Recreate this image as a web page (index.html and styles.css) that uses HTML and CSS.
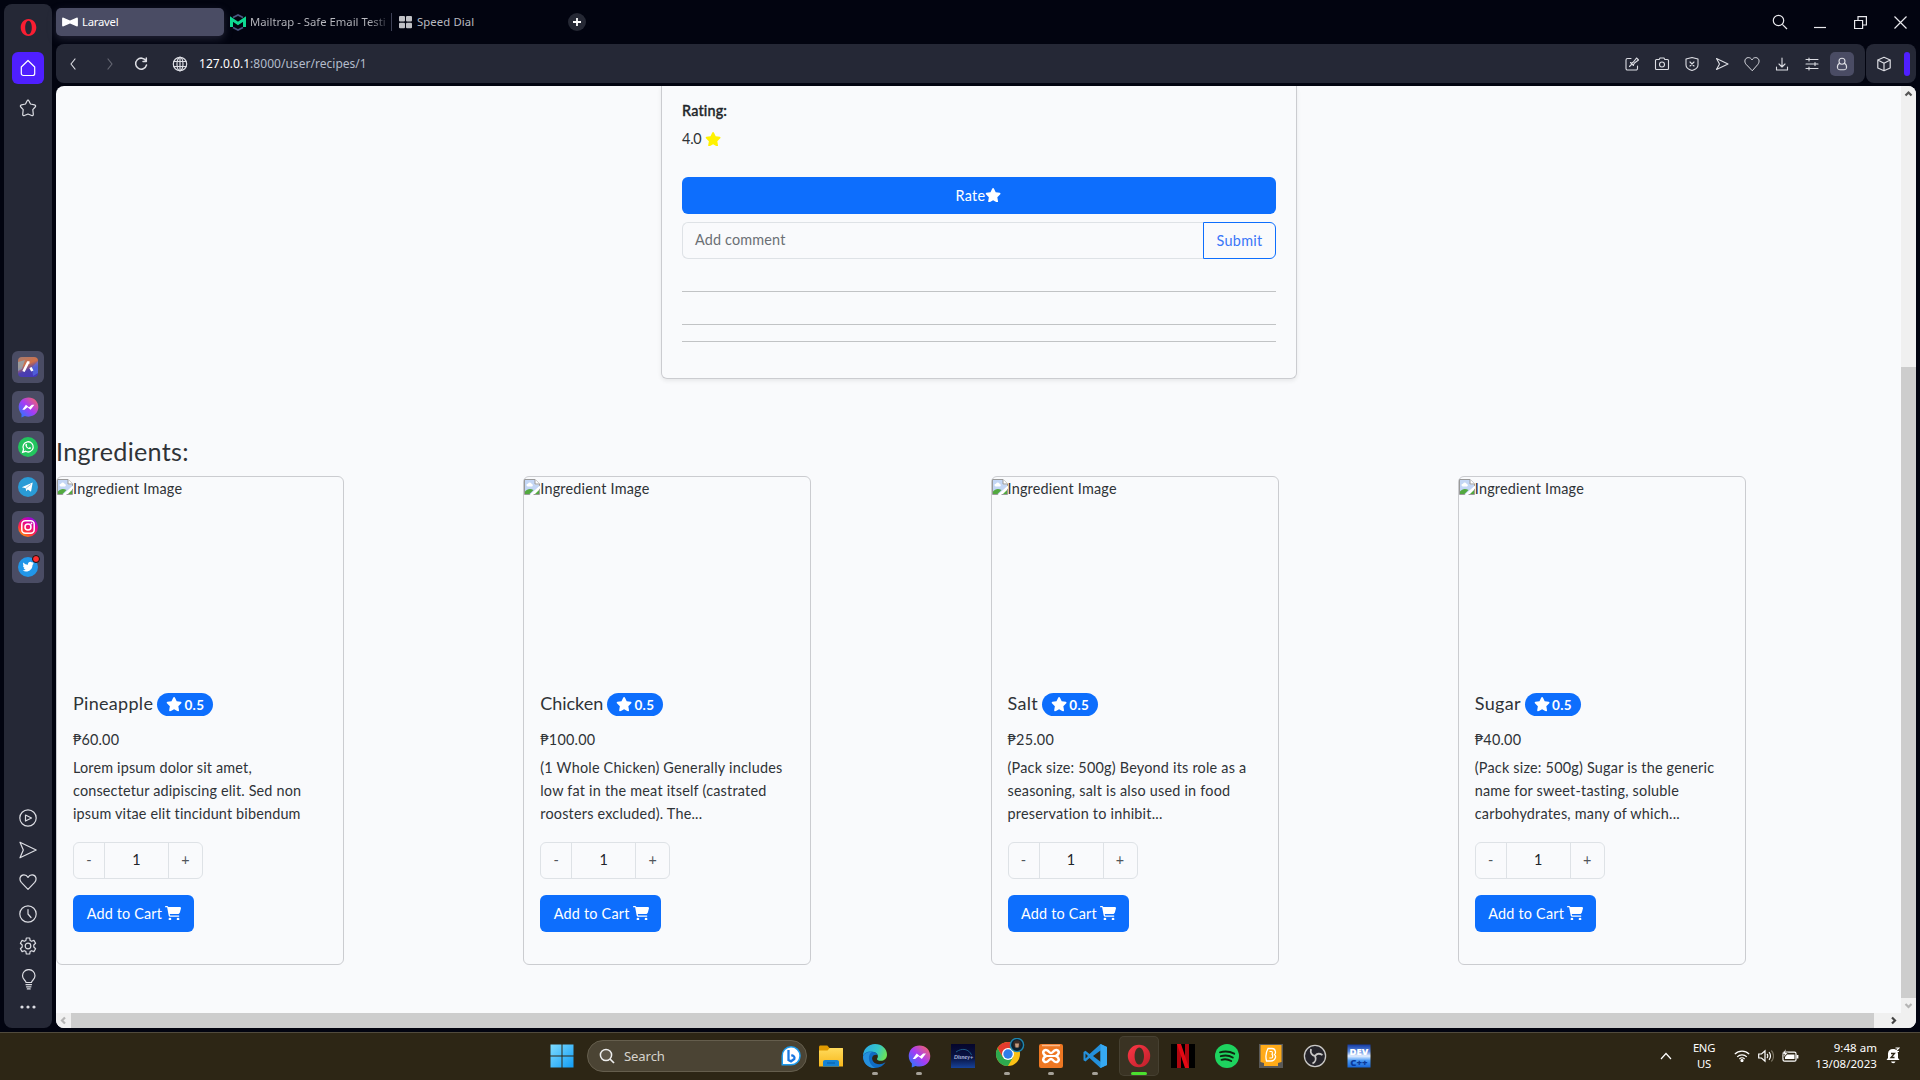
FILE: index.html
```html
<!DOCTYPE html>
<html lang="en">
<head>
<meta charset="utf-8">
<title>Laravel</title>
<link rel="stylesheet" href="styles.css">
</head>
<body>
<svg class="defs" aria-hidden="true">
  <defs>
    <symbol id="star" viewBox="0 0 576 512"><path d="M316.9 18C311.6 7 300.4 0 288.1 0s-23.4 7-28.8 18L195 150.3 51.4 171.5c-12 1.8-22 10.2-25.7 21.7s-.7 24.2 7.9 32.7L137.8 329 113.2 474.7c-2 12 3 24.2 12.9 31.3s23 8 33.8 2.3l128.3-68.5 128.3 68.5c10.8 5.7 23.9 4.9 33.8-2.3s14.9-19.3 12.9-31.3L438.5 329 542.7 225.9c8.6-8.5 11.7-21.2 7.9-32.7s-13.7-19.9-25.7-21.7L381.2 150.3 316.9 18z"/></symbol>
    <symbol id="cart" viewBox="0 0 576 512"><path d="M0 24C0 10.7 10.7 0 24 0H69.5c22 0 41.5 12.8 50.6 32h411c26.3 0 45.5 25 38.6 50.4l-41 152.3c-8.5 31.4-37 53.3-69.5 53.3H170.7l5.4 28.5c2.2 11.3 12.1 19.5 23.6 19.5H488c13.3 0 24 10.7 24 24s-10.7 24-24 24H199.7c-34.6 0-64.3-24.6-70.7-58.5L77.4 54.5c-.7-3.8-4-6.5-7.9-6.5H24C10.7 48 0 37.3 0 24zM128 464a48 48 0 1 1 96 0 48 48 0 1 1-96 0zm336-48a48 48 0 1 1 0 96 48 48 0 1 1 0-96z"/></symbol>
    <symbol id="broken" viewBox="0 0 16 16"><path d="M.5.5h10.5l4.500 4.500v10.500H.5z" fill="#fff" stroke="#9a9a9a"/><path d="M1 1h10v4.500h4V8L7 15H1z" fill="#c3d6f5"/><path d="M2.500 6.500a1.500 1.500 0 0 1 1.500-1.800 2 2 0 0 1 3.700.3 1.300 1.300 0 0 1 .3 2.500H3.500z" fill="#fff"/><path d="M1 15v-2.500c2-2.500 5-3.500 8.500-1.500L5.500 15z" fill="#53a93f"/><path d="M11 14.900 15 11v4z" fill="#53a93f"/><path d="M5.500 16 16 6.500v3L9 16z" fill="#fff"/><path d="M11 .5V5h4.500" fill="#fff" stroke="#9a9a9a"/></symbol>
    <symbol id="heart" viewBox="0 0 18 18"><path d="M9 16.300 2.300 9.300C-.2 6.300 1 2 4.700 1.800 6.700 1.700 8.200 2.800 9 4.400 9.800 2.800 11.300 1.700 13.300 1.800 17 2 18.200 6.300 15.700 9.300z"/></symbol>
    <symbol id="send" viewBox="0 0 18 18"><path d="M1 1.200 17.200 9 1 16.800 4.300 9z"/></symbol>
    <symbol id="ogo" viewBox="0 0 24 24"><path fill-rule="evenodd" d="M12 .8a11.200 11.200 0 1 0 0 22.400A11.200 11.200 0 0 0 12 .8zM12.300 3.400c2.700 0 4.700 3.800 4.700 8.600s-2 8.600-4.700 8.600S7.600 16.800 7.600 12s2-8.600 4.700-8.600z"/></symbol>
    <symbol id="mess" viewBox="0 0 22 22"><path d="M11 .5C5 .5.7 4.900.7 10.600c0 2.900 1.200 5.300 3 7.100l-.1 3.800 3.600-1.500c1.200.4 2.500.6 3.800.6 6 0 10.300-4.300 10.300-10S17 .5 11 .5z" fill="url(#gm)"/><path d="M4.500 13.300 8.300 8.200l3.200 2.500 3-2.500h2.700l-4 5.100-3.200-2.500-3.200 2.500z" fill="#fff"/></symbol>
    <linearGradient id="gm" x1="0" y1="1" x2="1" y2="0"><stop offset="0" stop-color="#1482ff"/><stop offset=".5" stop-color="#a63bf5"/><stop offset="1" stop-color="#ff6a55"/></linearGradient>
    <linearGradient id="ga" x1=".3" y1="0" x2=".7" y2="1"><stop offset="0" stop-color="#b07a68"/><stop offset=".35" stop-color="#d0704a"/><stop offset=".65" stop-color="#4c3fae"/><stop offset="1" stop-color="#4438b8"/></linearGradient>
    <linearGradient id="gi" x1=".1" y1="1" x2=".7" y2="0"><stop offset="0" stop-color="#ffb000"/><stop offset=".35" stop-color="#ff3040"/><stop offset=".7" stop-color="#e0009a"/><stop offset="1" stop-color="#8a10e0"/></linearGradient>
    <linearGradient id="gw" x1="0" y1="0" x2="1" y2="1"><stop offset="0" stop-color="#7fdcff"/><stop offset="1" stop-color="#119cf5"/></linearGradient>
    <linearGradient id="gf" x1="0" y1="0" x2="0" y2="1"><stop offset="0" stop-color="#ffdb5c"/><stop offset="1" stop-color="#f8b81c"/></linearGradient>
    <linearGradient id="ge" x1="0" y1=".2" x2="1" y2=".5"><stop offset="0" stop-color="#2aa8e8"/><stop offset=".6" stop-color="#35c6c8"/><stop offset="1" stop-color="#6be35a"/></linearGradient>
    <linearGradient id="gd" x1="0" y1="0" x2="0" y2="1"><stop offset="0" stop-color="#05052b"/><stop offset=".6" stop-color="#0a1647"/><stop offset="1" stop-color="#17439a"/></linearGradient>
    <linearGradient id="go" x1="0" y1="0" x2="1" y2="1"><stop offset="0" stop-color="#ff2b3a"/><stop offset="1" stop-color="#b8101c"/></linearGradient>
    <linearGradient id="gv" x1="0" y1="0" x2="0" y2="1"><stop offset="0" stop-color="#1238a0"/><stop offset=".3" stop-color="#5c8be0"/><stop offset=".5" stop-color="#e6f0ff"/><stop offset=".7" stop-color="#4a9af5"/><stop offset="1" stop-color="#1766d8"/></linearGradient>
  </defs>
</svg>

<div class="browser">
  <nav class="sidebar">
    <div class="side-top">
      <svg class="s-opera" width="17" height="19" viewBox="0 0 17 19"><path fill="#fa1e32" fill-rule="evenodd" d="M8.500 1C4 1 .7 4.700.7 9.500S4 18 8.500 18s7.800-3.700 7.800-8.500S13 1 8.500 1zm0 1.700c2 0 3.300 3 3.300 6.800s-1.300 6.800-3.300 6.800-3.300-3-3.300-6.800 1.300-6.800 3.300-6.800z"/></svg>
      <span class="home"><svg class="ln" width="18" height="18" viewBox="0 0 18 18"><path d="M9 1.500 15.700 8v6.500a2 2 0 0 1-2 2H4.300a2 2 0 0 1-2-2V8z"/></svg></span>
      <svg class="ln" width="18" height="18" viewBox="0 0 18 18"><path d="M9 1.200c.5 0 .8.300 1 .8l1.500 3 4 .8c1.200.3 1.500 1.400.7 2.200l-2.400 2.600.5 4.800c0 1-.8 1.500-1.700 1.100L9 15l-3.600 1.500c-.9.400-1.700-.1-1.700-1.100l.5-4.800L1.800 8c-.8-.8-.5-1.900.7-2.200l4-.8L8 2c.2-.5.5-.8 1-.8z"/></svg>
    </div>
    <div class="side-apps">
      <span><svg width="20" height="20" viewBox="0 0 20 20"><rect width="20" height="20" rx="4" fill="url(#ga)"/><path d="M0 5v9l4-2 3-9z" fill="#7fb7d0" opacity=".6"/><path d="M20 4v12l-5 3-1-9z" fill="#5577f0" opacity=".6"/><path d="M5.500 14.500 10 5.500h1.500M12.500 10.500l1.800 3.500" stroke="#fff" stroke-width="2.600" fill="none"/></svg></span>
      <span><svg width="21" height="21"><use href="#mess"/></svg></span>
      <span><svg width="20" height="20" viewBox="0 0 20 20"><circle cx="10" cy="10" r="10" fill="#23c45e"/><path d="M4.700 15.300l.9-3.100a5.100 5.100 0 1 1 2 2.100z" fill="none" stroke="#fff" stroke-width="1.300"/><path d="M7.600 7.200c.8-.9 1.200-.3 1.600.9l-.5.900c.6 1 1.300 1.500 2.200 1.900l.8-.8c1.200.5 1.700.8 1 1.600-2 1.600-6.300-2.300-5.100-4.500z" fill="#fff"/></svg></span>
      <span><svg width="20" height="20" viewBox="0 0 20 20"><circle cx="10" cy="10" r="10" fill="#2a9bd6"/><path d="M3.800 10.200 14.700 5.600 13 14.800l-3.200-2.300-1.600 1.700-.5-3z" fill="#fff"/><path d="M8 11.200 13 7.300" stroke="#9fc8e0"/></svg></span>
      <span><svg width="20" height="20" viewBox="0 0 20 20"><circle cx="10" cy="10" r="10" fill="url(#gi)"/><rect x="3.800" y="3.800" width="12.400" height="12.400" rx="3.500" fill="none" stroke="#fff" stroke-width="1.500"/><circle cx="10" cy="10" r="3" fill="none" stroke="#fff" stroke-width="1.500"/><circle cx="13.500" cy="6.500" r=".9" fill="#fff"/></svg></span>
      <span><svg width="20" height="20" viewBox="0 0 20 20"><circle cx="10" cy="10" r="10" fill="#2196e8"/><path d="M15.800 6.600l-1.300 1.300c.1 4.600-4.600 8.300-9.900 5.700 1.300 0 2.300-.3 3.200-1-1.200-.2-1.900-.8-2.100-1.700h.9C5.500 10.400 5 9.600 5 8.400l1 .2C4.900 7.600 4.800 6.400 5.400 5.400c1.200 1.400 2.700 2.200 4.500 2.300-.2-2.700 2.700-3.800 4.100-2.200l1.600-.5-1 1.300z" fill="#fff"/></svg><i class="dot"></i></span>
    </div>
    <div class="side-bot ln">
      <svg width="18" height="18" viewBox="0 0 18 18"><circle cx="9" cy="9" r="8.200"/><path d="M6.500 6 12.500 9l-6 3z"/></svg>
      <svg width="18" height="18"><use href="#send"/></svg>
      <svg width="18" height="18"><use href="#heart"/></svg>
      <svg width="18" height="18" viewBox="0 0 18 18"><circle cx="9" cy="9" r="8.200"/><path d="M9 4.500V9l3 3.500"/></svg>
      <svg width="18" height="18" viewBox="0 0 18 18"><path d="M7.300 1h3.400l.4 2.400 1.500.9 2.300-.9 1.700 2.900L14.800 8v2l1.800 1.700-1.700 2.900-2.300-.9-1.500.9-.4 2.400H7.300l-.4-2.400-1.500-.9-2.300.9-1.700-2.900L3.200 10V8L1.400 6.300l1.700-2.900 2.300.9 1.500-.9z"/><circle cx="9" cy="9" r="2.800"/></svg>
      <svg width="18" height="21" viewBox="0 0 18 21"><path d="M7 13.500c0-2-3.500-3-3.500-6.700a6 6 0 0 1 12.500 0c0 3.700-3.500 4.700-3.500 6.700zM7 15.700h5.500M7.500 17.800H12M8.300 19.900h2.900"/></svg>
      <svg class="dots" width="18" height="6" viewBox="0 0 18 6"><circle cx="3" cy="3" r="1.600"/><circle cx="9" cy="3" r="1.600"/><circle cx="15" cy="3" r="1.600"/></svg>
    </div>
  </nav>

  <div class="window">
    <header class="tabs">
      <div class="tab active"><svg width="16" height="16" viewBox="0 0 16 16"><path d="M1 3.500 8 6.500 15 3.500c.6 0 .9.300.9.900v7.200c0 .6-.3.900-.9.900L8 9.500 1 12.500c-.6 0-.9-.3-.9-.9V4.400c0-.6.3-.9.900-.9z" fill="#fff"/></svg><span>Laravel</span></div>
      <div class="tab mail"><svg width="16" height="17" viewBox="0 0 16 17"><path d="M3 3.500 8 1l5 2.500M3 13.500 8 16l5-2.500" fill="none" stroke="#4a5680" stroke-width="1.800"/><path d="M1.500 13V5L8 9.500l6.500-4.500v8" fill="none" stroke="#0fd992" stroke-width="3"/></svg><span class="fade">Mailtrap - Safe Email Testi</span></div>
      <div class="tab dial"><svg width="13" height="13" viewBox="0 0 13 13" fill="#c0c1c6"><rect width="6" height="5.500" rx="1"/><rect x="7" width="6" height="5.500" rx="1"/><rect y="6.700" width="6" height="5.500" rx="1"/><rect x="7" y="6.700" width="6" height="5.500" rx="1"/></svg><span>Speed Dial</span></div>
      <span class="plus"><svg width="18" height="18" viewBox="0 0 18 18"><circle cx="9" cy="9" r="9" fill="#252834"/><path d="M9 5v8M5 9h8" stroke="#fff" stroke-width="1.800"/></svg></span>
      <div class="winbtns">
        <svg width="16" height="16" viewBox="0 0 16 16"><circle cx="6.500" cy="6.500" r="5.200"/><path d="m10.300 10.300 4.700 4.700"/></svg>
        <svg width="12" height="16" viewBox="0 0 12 16"><path d="M0 13.500h12"/></svg>
        <svg width="13" height="13" viewBox="0 0 13 13"><path d="M.6 4.500h8v8h-8zM4 4.500V.6h8.400V9H8.600"/></svg>
        <svg width="13" height="13" viewBox="0 0 13 13"><path d="M.5.5l12 12M12.500.5l-12 12"/></svg>
      </div>
    </header>

    <div class="toolbar">
      <div class="address">
        <svg class="ln nav" width="18" height="18" viewBox="0 0 18 18"><path d="m11 4-4 5 4 5"/></svg>
        <svg class="ln nav off" width="18" height="18" viewBox="0 0 18 18"><path d="m7 4 4 5-4 5"/></svg>
        <svg class="ln nav" width="18" height="18" viewBox="0 0 18 18"><path d="M14 6a5.500 5.500 0 1 0 .5 4M14.300 3v3.500H11" stroke-width="1.500"/></svg>
        <svg class="ln globe" width="16" height="16" viewBox="0 0 16 16"><circle cx="8" cy="8" r="6.700"/><ellipse cx="8" cy="8" rx="3" ry="6.700"/><path d="M8 1v14M1.800 5.500h12.400M1.800 10.500h12.400"/></svg>
        <span class="url"><b>127.0.0.1</b>:8000/user/recipes/1</span>
        <div class="tools ln">
          <svg width="16" height="16" viewBox="0 0 16 16"><path d="M7 2.500H3.500a1.500 1.500 0 0 0-1.500 1.500v8.500A1.500 1.500 0 0 0 3.500 14H12a1.500 1.500 0 0 0 1.500-1.500V10M5.500 10.500l2-2M6.500 6.500 9.500 9.500M7.500 7.200 9.500 6l3-4L14.500 4l-4 3-1 1.800"/></svg>
          <svg width="16" height="16" viewBox="0 0 16 16"><path d="M5.200 3.500 6 2h4l.8 1.500h2.700a1 1 0 0 1 1 1v8a1 1 0 0 1-1 1h-11a1 1 0 0 1-1-1v-8a1 1 0 0 1 1-1z"/><circle cx="8" cy="8.500" r="2.500"/></svg>
          <svg width="16" height="16" viewBox="0 0 16 16"><path d="M8 1.500 14 3v6c0 3-2.500 4.500-6 5.500C4.500 13.500 2 12 2 9V3zM6 6l4 4M10 6l-4 4"/></svg>
          <svg width="16" height="16" viewBox="0 0 16 16"><path d="M2.500 2.500 14 8 2.500 13.500 5.500 8z"/></svg>
          <svg width="16" height="16"><use href="#heart"/></svg>
          <svg width="16" height="16" viewBox="0 0 16 16"><path d="M8 2v8.500M5 8l3 3 3-3M2.500 11v3h11v-3"/></svg>
          <svg width="16" height="16" viewBox="0 0 16 16"><path d="M2 3.500h12M2 8h12M2 12.500h12M5 2v3M11 6.500v3M5 11v3"/></svg>
          <span class="profile"><svg width="16" height="16" viewBox="0 0 16 16"><circle cx="8" cy="5.200" r="3"/><path d="M5.500 7.300C3.800 8.500 3.200 10.500 3.500 12c.3 1.300 1.200 1.700 2.200 1.700h4.600c1 0 1.900-.4 2.200-1.700.3-1.500-.3-3.500-2-4.700"/></svg></span>
        </div>
      </div>
      <div class="panel">
        <svg class="ln" width="16" height="16" viewBox="0 0 16 16"><path d="M8 1.300 14.200 4v8L8 14.700 1.800 12V4zM1.800 4 8 7.200 14.200 4M8 7.200v7.500"/></svg>
        <i class="accent"></i>
      </div>
    </div>

    <div class="viewport">
      <main class="page">
        <section class="recipe">
          <p class="label">Rating:</p>
          <p class="score">4.0 <svg class="ic yellow"><use href="#star"/></svg></p>
          <button class="btn rate"><span>Rate</span><svg class="ic"><use href="#star"/></svg></button>
          <div class="comment"><span class="field">Add comment</span><button class="submit">Submit</button></div>
          <hr class="h1"><hr class="h2"><hr class="h3">
        </section>

        <h3 class="heading">Ingredients:</h3>
        <div class="cards">
          <article class="card">
            <div class="pic"><svg width="16" height="16"><use href="#broken"/></svg>Ingredient Image</div>
            <h5>Pineapple <span class="badge"><svg class="ic"><use href="#star"/></svg>0.5</span></h5>
            <p class="price">₱60.00</p>
            <p class="desc">Lorem ipsum dolor sit amet,<br>consectetur adipiscing elit. Sed non<br>ipsum vitae elit tincidunt bibendum</p>
            <div class="qty"><span>-</span><span class="num">1</span><span>+</span></div>
            <button class="btn add">Add to Cart <svg class="ic"><use href="#cart"/></svg></button>
          </article>
          <article class="card loose">
            <div class="pic"><svg width="16" height="16"><use href="#broken"/></svg>Ingredient Image</div>
            <h5 class="tight">Chicken <span class="badge"><svg class="ic"><use href="#star"/></svg>0.5</span></h5>
            <p class="price">₱100.00</p>
            <p class="desc">(1 Whole Chicken) Generally includes<br>low fat in the meat itself (castrated<br>roosters excluded). The...</p>
            <div class="qty"><span>-</span><span class="num">1</span><span>+</span></div>
            <button class="btn add">Add to Cart <svg class="ic"><use href="#cart"/></svg></button>
          </article>
          <article class="card loose">
            <div class="pic"><svg width="16" height="16"><use href="#broken"/></svg>Ingredient Image</div>
            <h5>Salt <span class="badge"><svg class="ic"><use href="#star"/></svg>0.5</span></h5>
            <p class="price">₱25.00</p>
            <p class="desc">(Pack size: 500g) Beyond its role as a<br>seasoning, salt is also used in food<br>preservation to inhibit...</p>
            <div class="qty"><span>-</span><span class="num">1</span><span>+</span></div>
            <button class="btn add">Add to Cart <svg class="ic"><use href="#cart"/></svg></button>
          </article>
          <article class="card loose">
            <div class="pic"><svg width="16" height="16"><use href="#broken"/></svg>Ingredient Image</div>
            <h5>Sugar <span class="badge"><svg class="ic"><use href="#star"/></svg>0.5</span></h5>
            <p class="price">₱40.00</p>
            <p class="desc">(Pack size: 500g) Sugar is the generic<br>name for sweet-tasting, soluble<br>carbohydrates, many of which...</p>
            <div class="qty"><span>-</span><span class="num">1</span><span>+</span></div>
            <button class="btn add">Add to Cart <svg class="ic"><use href="#cart"/></svg></button>
          </article>
        </div>
      </main>
      <div class="vbar">
        <svg width="15" height="15" viewBox="0 0 15 15"><path d="m4.500 9.500 3-3 3 3" stroke="#555"/></svg>
        <i></i>
        <svg width="15" height="15" viewBox="0 0 15 15"><path d="m4.500 6 3 3 3-3" stroke="#b5b5b5"/></svg>
      </div>
      <div class="hbar">
        <svg width="15" height="15" viewBox="0 0 15 15"><path d="m9 4.500-3 3 3 3" stroke="#b5b5b5"/></svg>
        <i></i>
        <svg width="15" height="15" viewBox="0 0 15 15"><path d="m6 4.500 3 3-3 3" stroke="#444"/></svg>
      </div>
      <div class="corner"></div>
    </div>
  </div>
</div>

<footer class="taskbar">
  <div class="apps">
    <span class="app start"><svg width="24" height="24" viewBox="0 0 24 24" fill="url(#gw)"><path d="M.5.5h11v11H.5zM12.500.5h11v11h-11zM.5 12.500h11v11H.5zM12.500 12.500h11v11h-11z"/></svg></span>
    <div class="search">
      <svg width="16" height="16" viewBox="0 0 16 16"><circle cx="7" cy="7" r="5.600" fill="#8b867c" fill-opacity=".3" stroke="#eee" stroke-width="1.500"/><path d="m11 11 4 4" stroke="#eee" stroke-width="1.700"/></svg>
      <span>Search</span>
      <svg class="bing" width="20" height="20" viewBox="0 0 20 20"><path d="M10 0a9.800 9.800 0 1 1 0 19.600L.5 19.500V10A9.700 9.700 0 0 1 10 0z" fill="#1d9bee"/><path d="M10 1.500a8.300 8.300 0 1 1 0 16.600H2v-8a8 8 0 0 1 8-8.600z" fill="#fff"/><path d="M7.500 4v10l2.500 1.300 3.300-2.300c.6-2-.2-3-3-3.800" fill="none" stroke="#1b78e0" stroke-width="2.300"/></svg>
    </div>
    <span class="app"><svg width="24" height="24" viewBox="0 0 24 24"><path d="M0 3.500C0 2 .6 1.500 1.500 1.500h6.800L10.500 4H24v5H0z" fill="#e09a00"/><path d="M0 6.500h8.500L10.800 4H23c.6 0 1 .4 1 1v17.500H0z" fill="url(#gf)"/><path d="M4 22.500V18c0-1.200.8-2 2-2h12c1.200 0 2 .8 2 2v4.500z" fill="#1583d4"/><path d="M8 19h8" stroke="#0a62ad" stroke-width="1.200"/></svg></span>
    <span class="app run"><svg width="24" height="24" viewBox="0 0 24 24"><path d="M0 12A12 12 0 0 1 12 0c7 0 12 5 12 10.500 0 4-2.800 6.300-6.200 6.300-2.500 0-3.800-.8-3.800-1.800 0-.8.900-1.200.9-2.800C14.900 9.500 12 8 9 8 5 8 1 9.500 0 12z" fill="url(#ge)"/><path d="M0 12C1 8.500 5 7 9 7.500c3 .3 5 1.800 5.700 3.500-5-1-7 3-4.500 6.500 2.300 3.200 8 3.500 12.300.8C20.500 21.800 16.500 24 12 24 5 24 0 18.500 0 12z" fill="#0f6cc4"/><path d="M9 8c-5 3-4 12 3 16-7 .3-12-5-12-11.500C1.500 9 5 7.500 9 8z" fill="#2590dd"/></svg></span>
    <span class="app run"><svg width="23" height="23"><use href="#mess"/></svg></span>
    <span class="app"><svg width="24" height="24" viewBox="0 0 24 24"><rect width="24" height="24" fill="url(#gd)"/><path d="M5 8c6-4.500 13-3 15.500 3" fill="none" stroke="#1c5a86" stroke-width="1"/><text x="3" y="15" font-size="5.600" font-weight="700" font-style="italic" font-family="Lato, sans-serif" fill="#aeb8dc">Disney+</text></svg></span>
    <span class="app run"><svg class="wide" width="30" height="30" viewBox="0 0 30 30"><circle cx="13" cy="16" r="12" fill="#fbc116"/><path d="M2.600 10a12 12 0 0 0 10.400 18l5.200-9L7.800 19z" fill="#2da94f"/><path d="M13 10h10.400a12 12 0 0 0-20.800 0L7.800 19z" fill="#e33b2e"/><circle cx="13" cy="16" r="6" fill="#fff"/><circle cx="13" cy="16" r="4.700" fill="#2f7de9"/><circle cx="22" cy="7" r="6.600" fill="#0c2230" stroke="#1f86b0" stroke-width="1.400"/><circle cx="22" cy="6" r="3.800" fill="#3a2c26"/><path d="M20 5.500h4l-.5 4h-3z" fill="#c79b7d"/></svg></span>
    <span class="app run"><svg width="24" height="24" viewBox="0 0 24 24"><rect width="24" height="24" rx="2" fill="#ee7722"/><path d="M3 1.500h18" stroke="#f8b98c" stroke-width="1.500"/><path d="M8.500 6.500C6 5 3.500 7 4.500 9.500c.5 1.500 2 2 3 2.500-1 .5-2.500 1-3 2.500-1 2.500 1.500 4.500 4 3 1.500-1 2-2.500 3.500-2.500s2 1.500 3.500 2.500c2.500 1.500 5-.5 4-3-.5-1.500-2-2-3-2.500 1-.5 2.500-1 3-2.500 1-2.500-1.500-4.500-4-3C14 7.500 13.500 9 12 9s-2-1.500-3.500-2.500z" fill="none" stroke="#fff" stroke-width="2.500"/><path d="M8 12h8" stroke="#fff" stroke-width="2"/></svg></span>
    <span class="app run"><svg width="24" height="24" viewBox="0 0 24 24"><path d="M17.500 0 24 3v18l-6.500 3L6.500 14 2.500 17.500.5 16.200V8L2.500 6.700l4 3.300zM17.500 6.500 10 12l7.500 5.700zM2.500 9.500v5L5 12z" fill="#2490db" fill-rule="evenodd"/><path d="M17.500 0 24 3v18l-6.500 3z" fill="#36a9f2"/></svg></span>
    <span class="app run current"><svg width="24" height="24" fill="url(#go)"><use href="#ogo"/></svg></span>
    <span class="app"><svg width="24" height="24" viewBox="0 0 24 24"><path d="M0 0h24v24H0z"/><path d="M6 0h4v24H6zM14 0h4v24h-4z" fill="#b00710"/><path d="M6 0h4l8 24h-4z" fill="#e50914"/></svg></span>
    <span class="app"><svg width="24" height="24" viewBox="0 0 24 24"><circle cx="12" cy="12" r="12" fill="#1ed35f"/><path d="M5 8.300c5-1.400 10-.9 14.200 1.400M5.800 12.200c4.200-1.200 8.500-.7 12 1.300M6.500 15.800c3.500-.9 6.800-.5 9.700 1.200" fill="none" stroke="#10250f" stroke-width="1.900" stroke-linecap="round"/></svg></span>
    <span class="app"><svg width="24" height="24" viewBox="0 0 24 24"><path d="M0 0h24v24H0z" fill="#595958"/><path d="M1.500 1h21v17l-3.500 1v3H5v-3l-3.500-1z" fill="#ffab19"/><path d="M9 4.500h4c4 0 4 5 2.500 6 2 1.500 1 6.500-3.500 6.500H7.500c-1-4-.5-9 1.500-12.500z" fill="none" stroke="#fff" stroke-width="1.300"/><path d="M10.500 7.500h2c1.200 0 1.200 2.800 0 2.800 1.700 0 1.500 3.700 0 3.700h-2.200" fill="none" stroke="#fff" stroke-width="1.200"/></svg></span>
    <span class="app"><svg width="24" height="24" viewBox="0 0 24 24"><circle cx="12" cy="12" r="10.600" fill="#25242a" stroke="#c9c8c6" stroke-width="1.300"/><path d="M8 5c-1 4 1 6.500 4 7M19.500 11c-3.500-2-6-1.500-7.500 1M9.500 19.500c3-1.500 4-4.500 2.500-7.500" fill="none" stroke="#c9c8c6" stroke-width="1.800"/></svg></span>
    <span class="app"><svg width="24" height="24" viewBox="0 0 24 24"><rect x=".5" y=".5" width="23" height="23" fill="url(#gv)"/><text x="12" y="11" text-anchor="middle" font-size="9.500" font-weight="800" font-family="Open Sans, sans-serif" fill="#fff">DEV</text><text x="12" y="21.500" text-anchor="middle" font-size="9.500" font-weight="800" font-family="Open Sans, sans-serif" fill="#0a3a9a">C++</text></svg></span>
  </div>
  <div class="tray">
    <svg class="up" width="12" height="8" viewBox="0 0 12 8"><path d="M1 7 6 1.500 11 7"/></svg>
    <div class="lang">ENG<br>US</div>
    <svg class="wifi" width="16" height="13" viewBox="0 0 16 13"><path d="M.8 5.200a10.200 10.200 0 0 1 14.400 0M3.200 7.800a6.800 6.800 0 0 1 9.600 0M5.400 10a3.700 3.700 0 0 1 5.200 0"/><circle cx="8" cy="11.500" r="1" fill="#fff"/></svg>
    <svg class="vol" width="16" height="14" viewBox="0 0 16 14"><path d="M.7 5v4h2.800l3.500 3.200V1.800L3.500 5zM9 5c1 1 1 3 0 4M11 3.200c2 2 2 5.600 0 7.600"/><path d="M13.300 1.500c3 3.200 3 7.800 0 11" stroke="#77705f"/></svg>
    <svg class="bat" width="17" height="13" viewBox="0 0 17 13"><rect x="1" y="3.200" width="13" height="9" rx="1.500"/><path d="M5 5.500h7.500v4.500H3V8z" fill="#fff" stroke="none"/><path d="M15.500 6v3.500" stroke-width="1.800"/><path d="M4 0 0 5h2.500L1.500 8.500 6 3.500H3.500z" fill="#fff" stroke="#2d2615" stroke-width=".4"/></svg>
    <div class="clock">9:48 am<br>13/08/2023</div>
    <svg class="bell" width="14" height="17" viewBox="0 0 14 17"><path d="M.5 13 2 11V6.500A5 5 0 0 1 7 2c3 0 5 2 5 5v4l1.500 2zM5 14.500h4.500a2.300 2.300 0 0 1-4.500 0z" fill="#fff" stroke="none"/><path d="M5 6.500h3.500L5 10.500h3.500" stroke="#2d2615" stroke-width="1.300"/><path d="M9.500 1H13L9.500 4.500H13" stroke="#fff" stroke-width="1.100"/></svg>
  </div>
</footer>
</body>
</html>
```
FILE: styles.css
```css
* { box-sizing: border-box; }
body {
  margin: 0;
  width: 1920px;
  height: 1080px;
  overflow: hidden;
  display: flex;
  flex-direction: column;
  background: #020410;
  font: 400 14.4px/23px Lato, "Open Sans", sans-serif;
  color: #2f3337;
}
svg { display: block; flex: none; }
p, h3, h5 { margin: 0; font-weight: 400; }
button { font: inherit; letter-spacing: inherit; cursor: pointer; }
.defs { width: 0; height: 0; position: absolute; }
.ln { fill: none; stroke: #dcdde3; stroke-width: 1.2; stroke-linejoin: round; stroke-linecap: round; }

/* Browser frame */
.browser { height: 1032px; display: flex; gap: 4px; padding: 4px; }
.sidebar {
  width: 48px;
  display: flex;
  flex-direction: column;
  align-items: center;
  background: #252836;
  border-radius: 8px;
}
.side-top { display: flex; flex-direction: column; align-items: center; padding-top: 14px; height: 347px; }
.home { width: 32px; height: 32px; margin: 15px 0; border-radius: 6px; background: #4f1fff; display: grid; place-items: center; }
.home .ln { stroke: #fff; }
.side-apps { display: grid; gap: 8px; height: 457px; align-content: start; }
.side-apps span { width: 32px; height: 32px; border-radius: 6px; background: #4a4c64; display: grid; place-items: center; position: relative; }
.dot { position: absolute; top: 4px; right: 4px; width: 8px; height: 8px; border-radius: 50%; background: #ff2e2e; border: 1px solid #111; }
.side-bot { display: flex; flex-direction: column; align-items: center; gap: 14px; padding: 1px 1px 0 0; }
.side-bot .dots { fill: #dcdde3; stroke: none; }

.window { flex: 1; display: flex; flex-direction: column; min-width: 0; }
.tabs { height: 40px; display: flex; align-items: center; padding-bottom: 4px; font: 11.3px/16px "Noto Sans", sans-serif; color: #b9bac0; }
.tab { height: 28px; display: flex; align-items: center; }
.tab span { white-space: nowrap; }
.active { width: 168px; gap: 4px; padding-left: 6px; color: #fff; background: #4a4c64; border-radius: 5px; box-shadow: 0 3px 8px #4a4c6470; letter-spacing: -.25px; }
.mail { margin-left: 6px; gap: 4px; width: 161px; }
.fade { width: 139px; background: linear-gradient(90deg, #b9bac0 85%, #20222e); -webkit-background-clip: text; background-clip: text; color: transparent; }
.dial { border-left: 1px solid #3d4055; height: 18px; padding-left: 7px; gap: 5px; width: 177px; letter-spacing: .1px; }
.winbtns { margin-left: auto; display: flex; align-items: center; gap: 27px; padding-right: 9px; fill: none; stroke: #e8e8ec; stroke-width: 1.2; }
.winbtns svg:first-child { margin-right: -2px; }
.winbtns svg:nth-child(2) { margin: 0 1px; }

.toolbar { height: 39px; display: flex; gap: 1px; }
.address { width: 1809px; background: #252836; border-radius: 8px; display: flex; align-items: center; padding: 0 11px 0 8px; }
.nav + .nav { margin-left: 19px; }
.nav:nth-child(3) { margin-left: 13px; }
.off { opacity: .35; }
.globe { margin: 0 11px 0 22px; }
.url { font: 12px/18px "Noto Sans", sans-serif; color: #b3bccb; letter-spacing: .03px; }
.url b { font-weight: 400; color: #fff; }
.tools { margin-left: auto; display: flex; align-items: center; gap: 14px; stroke-width: 1.1; }
.profile { width: 24px; height: 24px; border-radius: 5px; background: #4a4c64; display: grid; place-items: center; margin-left: -4px; }
.panel { flex: 1; background: #252836; border-radius: 8px; display: flex; align-items: center; justify-content: space-between; padding: 0 6px 0 10px; }
.accent { width: 6px; height: 24px; border-radius: 3px; background: #4f1fff; }

/* Page viewport with scrollbars */
.viewport {
  margin-top: 3px;
  flex: 1;
  display: grid;
  grid-template: minmax(0, 1fr) 15px / minmax(0, 1fr) 15px;
  border-radius: 8px;
  overflow: hidden;
  background: #f9fafc;
}
.page { overflow: hidden; letter-spacing: .17px; }
.vbar, .hbar { background: #f0f0f0; display: flex; align-items: center; fill: none; stroke-width: 2.2; }
.vbar { flex-direction: column; }
.vbar i { width: 15px; height: 631px; margin-top: 266px; background: #cdcdcd; }
.hbar i { width: 1803px; height: 15px; margin-right: 12px; background: #cdcdcd; }
.corner { background: #f0f0f0; }

/* Recipe card */
.recipe {
  width: 636px;
  height: 293px;
  margin: 0 0 57px 605px;
  padding: 13px 20px 0;
  border: 1px solid #cbccd0;
  border-top: 0;
  border-radius: 0 0 6px 6px;
  box-shadow: 0 2px 4px #00000013;
}
.label { font-weight: 500; color: #212529; -webkit-text-stroke: .35px; }
.score { margin: 5px 0 27px; letter-spacing: -.2px; }
.ic { display: inline-block; width: 16.2px; height: 14.4px; fill: currentColor; vertical-align: -2px; }
.yellow { color: #fff200; }
.btn { border: 0; background: #0d6efd; color: #fff; border-radius: 6px; height: 37px; }
.rate { width: 100%; display: flex; align-items: center; justify-content: center; letter-spacing: .3px; padding: 0 1px 1px 0; }
.comment { margin-top: 8px; height: 37px; display: flex; }
.field { flex: 1; border: 1px solid #dee2e6; border-right: 0; border-radius: 6px 0 0 6px; padding: 5px 12px; color: #6b7075; }
.submit { width: 73px; border: 1px solid #0d6efd; border-radius: 0 6px 6px 0; background: none; color: #3a76f8; padding: 0 0 1px; letter-spacing: .3px; }
hr { border: 0; height: 1px; background: #c1c3c5; margin: 32px 0 0; }
.h3 { margin-top: 16px; }

/* Ingredients */
.heading { font-size: 25.2px; line-height: 30px; letter-spacing: .27px; margin-bottom: 10px; }
.cards { display: grid; grid-template-columns: repeat(3, 467.25px) 288px; }
.card { width: 288px; height: 489px; border: 1px solid #cbccd0; border-radius: 6px; padding: 0 16px; }
.loose { letter-spacing: .22px; }
.pic { height: 216px; margin-left: -16px; display: flex; align-items: flex-start; letter-spacing: .22px; }
.pic svg { margin-top: 2px; }
h5 { font-size: 18px; line-height: 20px; height: 35px; letter-spacing: .3px; display: flex; align-items: flex-start; gap: 4px; }
.tight { letter-spacing: -.03px; }
.badge { height: 23px; padding: 0 9px 0 9px; border-radius: 12px; background: #0d6efd; color: #fff; font-weight: 700; font-size: 13.5px; letter-spacing: .4px; display: flex; align-items: center; gap: 2px; }
.price { margin-bottom: 5px; }
.desc { height: 69.5px; white-space: nowrap; }
.qty { margin: 16px 0; width: 130px; height: 37px; display: grid; grid-template-columns: 30px 65px 1fr; border: 1px solid #dee2e6; border-radius: 6px; text-align: center; line-height: 34px; color: #51565b; }
.num { border: solid #dee2e6; border-width: 0 1px; color: #212529; }
.add { width: 121px; padding: 0 0 0 1px; display: flex; align-items: center; justify-content: center; gap: 3px; }

/* Taskbar */
.taskbar { height: 48px; border-top: 1px solid #514b3d; background: #2d2615; display: flex; justify-content: space-between; color: #fff; font: 11.5px/16px "Noto Sans", sans-serif; }
.apps { display: flex; align-items: flex-start; padding-left: 540px; }
.app { position: relative; width: 44px; height: 46px; display: grid; place-items: center; }
.start { margin-right: 1px; }
.app .wide { margin: -6px 0 0 6px; }
.run::after { content: ""; position: absolute; bottom: 4px; left: 19px; width: 6px; height: 3px; border-radius: 2px; background: #a5a198; }
.current::before { content: ""; position: absolute; inset: 3px 2px; border-radius: 5px; background: #ffffff10; border: 1px solid #ffffff10; }
.current.run::after { left: 14px; width: 16px; background: #4be02f; }
.search { width: 220px; height: 32px; margin: 7px 2px 0; border-radius: 16px; border: 1px solid #655e4d; background: #4b4434; display: flex; align-items: center; padding: 0 5px 0 11px; font-size: 13.1px; letter-spacing: -.1px; color: #d6d3cc; }
.search span { margin-left: 9px; }
.bing { margin-left: auto; }
.tray { display: flex; align-items: center; padding: 0 20px 2px 0; fill: none; stroke: #fff; stroke-width: 1.2; }
.tray div { stroke: none; }
.lang { width: 24px; margin: 0 18px 0 20px; text-align: center; letter-spacing: -.3px; font-size: 11.3px; }
.vol { margin: 0 8px; }
.clock { width: 66px; margin: 0 9px 0 12px; text-align: right; letter-spacing: .05px; white-space: nowrap; }
```
